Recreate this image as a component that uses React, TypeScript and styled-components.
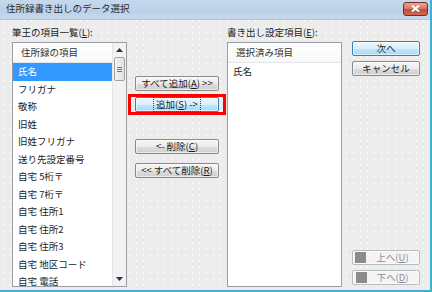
import styled, { createGlobalStyle } from "styled-components";

const GlobalStyle = createGlobalStyle`
    html, body {
        margin: 0;
        padding: 0;
        background: #ececec;
    }
    body {
        font-family: "Noto Sans CJK JP", "Noto Sans", sans-serif;
        font-size: 9.5px;
        color: #1c1c1c;
    }
`;

const Window = styled.div`
    width: 432px;
    height: 292px;
    box-sizing: border-box;
    display: flex;
    flex-direction: column;
    border-right: 2px solid #41aed6;
    border-bottom: 2px solid #41aed6;
    background-color: #ececec;
    background-image: radial-gradient(circle, rgba(255, 255, 255, 0.85) 0.5px, transparent 0.9px);
    background-size: 7px 6px;
    overflow: hidden;
`;

const TitleBar = styled.div`
    height: 19px;
    flex-shrink: 0;
    display: flex;
    align-items: center;
    justify-content: space-between;
    padding: 0 2px 0 6px;
    background: linear-gradient(#c6d8ee, #bcd0e8 60%, #c8d9ed);
    border-bottom: 1px solid #b0c2d8;
`;

const TitleText = styled.div`
    font-size: 9.5px;
    line-height: 12px;
    color: #2a2a2a;
    margin-top: -4px;
`;

const CloseButton = styled.div`
    width: 23px;
    height: 12px;
    margin-top: -2px;
    display: flex;
    align-items: center;
    justify-content: center;
    border: 1px solid #7a2a20;
    border-radius: 3px;
    background: linear-gradient(#e8a898, #d8786a 45%, #c24a36 55%, #d06a52);
`;

const Body = styled.div`
    flex: 1;
    display: flex;
    padding: 5px 0 3px 12px;
`;

const ListColumn = styled.div`
    width: 115px;
    display: flex;
    flex-direction: column;
`;

const Label = styled.div`
    height: 14px;
    line-height: 14px;
    margin-bottom: 3px;
    white-space: nowrap;
`;

const ListBox = styled.div`
    height: 245px;
    box-sizing: border-box;
    border: 1px solid #9a9ea6;
    background: #fff;
    display: flex;
    overflow: hidden;
`;

const ListInner = styled.div`
    flex: 1;
    display: flex;
    flex-direction: column;
    overflow: hidden;
`;

const ListHeader = styled.div`
    height: 19px;
    flex-shrink: 0;
    line-height: 19px;
    padding-left: 8px;
    background: linear-gradient(#ffffff, #f7f8f9);
    border-bottom: 1px solid #e3e5e8;
    color: #333;
`;

const Row = styled.div<{ $selected?: boolean }>`
    height: 17.5px;
    flex-shrink: 0;
    line-height: 17px;
    padding-left: 5px;
    white-space: nowrap;
    background: ${(p) => (p.$selected ? "#3399ff" : "transparent")};
    color: ${(p) => (p.$selected ? "#ffffff" : "#1c1c1c")};
`;

const ScrollBar = styled.div`
    width: 13px;
    flex-shrink: 0;
    display: flex;
    flex-direction: column;
    align-items: center;
    background: #f2f2f2;
    border-left: 1px solid #e6e6e6;
`;

const ScrollArrow = styled.div`
    height: 14px;
    width: 100%;
    display: flex;
    align-items: center;
    justify-content: center;
`;

const ScrollThumb = styled.div`
    width: 11px;
    height: 24px;
    box-sizing: border-box;
    border: 1px solid #a2a2a2;
    border-radius: 2px;
    background: linear-gradient(90deg, #f4f4f4, #e0e0e0);
    display: flex;
    flex-direction: column;
    align-items: center;
    justify-content: center;
    gap: 1px;
`;

const Grip = styled.div`
    width: 5px;
    height: 1px;
    background: #7a7a7a;
`;

const ScrollTrack = styled.div`
    flex: 1;
`;

const MiddleColumn = styled.div`
    width: 100px;
    display: flex;
    flex-direction: column;
    align-items: center;
    padding-top: 51px;
`;

const Button = styled.div<{ $focus?: boolean; $disabled?: boolean; $width?: number }>`
    width: ${(p) => p.$width ?? 84}px;
    height: 15px;
    box-sizing: border-box;
    display: flex;
    align-items: center;
    justify-content: center;
    gap: 8px;
    white-space: nowrap;
    line-height: 13px;
    border: 1px solid ${(p) => (p.$focus ? "#3c7fb1" : p.$disabled ? "#b8bcbf" : "#8a8a8a")};
    border-radius: 2px;
    color: ${(p) => (p.$disabled ? "#8c8c8c" : "#1c1c1c")};
    background: ${(p) =>
        p.$focus
            ? "linear-gradient(#eaf6fd 0%, #d9f0fc 50%, #bee6fd 51%, #a7d9f5 100%)"
            : p.$disabled
            ? "#f4f4f4"
            : "linear-gradient(#f6f6f6 0%, #ebebeb 50%, #dddddd 51%, #cfcfcf 100%)"};
    box-shadow: inset 0 0 0 1px rgba(255, 255, 255, 0.6);
`;

const Caption = styled.span<{ $focus?: boolean }>`
    padding: 0 2px;
    outline: ${(p) => (p.$focus ? "1px dotted #444" : "none")};
`;

const Highlight = styled.div`
    border: 3px solid #ff0000;
    padding: 0 4px;
    margin-top: 3px;
`;

const MiddleGap = styled.div<{ $h: number }>`
    height: ${(p) => p.$h}px;
    flex-shrink: 0;
`;

const ButtonColumn = styled.div`
    width: 68px;
    margin-left: 10px;
    display: flex;
    flex-direction: column;
    gap: 5px;
    padding-top: 16px;
    padding-bottom: 2px;
`;

const BottomGroup = styled.div`
    margin-top: auto;
    display: flex;
    flex-direction: column;
    gap: 5px;
`;

const GrayBox = styled.span`
    width: 11px;
    height: 11px;
    background: #8c8c8c;
    margin-left: -6px;
`;

const leftItems = [
    "氏名",
    "フリガナ",
    "敬称",
    "旧姓",
    "旧姓フリガナ",
    "送り先設定番号",
    "自宅 5桁〒",
    "自宅 7桁〒",
    "自宅 住所1",
    "自宅 住所2",
    "自宅 住所3",
    "自宅 地区コード",
    "自宅 電話",
];

const Arrow = ({ up }: { up?: boolean }) => (
    <svg width="7" height="4" viewBox="0 0 7 4">
        <path d={up ? "M0 4 L3.5 0 L7 4 Z" : "M0 0 L3.5 4 L7 0 Z"} fill="#333" />
    </svg>
);

const App = () => {
    return (
        <>
            <GlobalStyle />
            <Window>
                <TitleBar>
                    <TitleText>住所録書き出しのデータ選択</TitleText>
                    <CloseButton>
                        <svg width="9" height="7" viewBox="0 0 9 7">
                            <path d="M1 0.5 L8 6.5 M8 0.5 L1 6.5" stroke="#fff" strokeWidth="2" />
                        </svg>
                    </CloseButton>
                </TitleBar>
                <Body>
                    <ListColumn>
                        <Label>
                            筆王の項目一覧(<u>L</u>):
                        </Label>
                        <ListBox>
                            <ListInner>
                                <ListHeader>住所録の項目</ListHeader>
                                {leftItems.map((item, i) => (
                                    <Row key={item} $selected={i === 0}>
                                        {item}
                                    </Row>
                                ))}
                            </ListInner>
                            <ScrollBar>
                                <ScrollArrow>
                                    <Arrow up />
                                </ScrollArrow>
                                <ScrollThumb>
                                    <Grip />
                                    <Grip />
                                    <Grip />
                                </ScrollThumb>
                                <ScrollTrack />
                                <ScrollArrow>
                                    <Arrow />
                                </ScrollArrow>
                            </ScrollBar>
                        </ListBox>
                    </ListColumn>

                    <MiddleColumn>
                        <Button>
                            <Caption>
                                すべて追加(<u>A</u>) &gt;&gt;
                            </Caption>
                        </Button>
                        <Highlight>
                            <Button $focus>
                                <Caption $focus>
                                    追加(<u>S</u>) -&gt;
                                </Caption>
                            </Button>
                        </Highlight>
                        <MiddleGap $h={24} />
                        <Button>
                            <Caption>
                                &lt;- 削除(<u>C</u>)
                            </Caption>
                        </Button>
                        <MiddleGap $h={9} />
                        <Button>
                            <Caption>
                                &lt;&lt; すべて削除(<u>R</u>)
                            </Caption>
                        </Button>
                    </MiddleColumn>

                    <ListColumn>
                        <Label>
                            書き出し設定項目(<u>E</u>):
                        </Label>
                        <ListBox>
                            <ListInner>
                                <ListHeader>選択済み項目</ListHeader>
                                <Row>氏名</Row>
                            </ListInner>
                        </ListBox>
                    </ListColumn>

                    <ButtonColumn>
                        <Button $focus $width={68}>
                            <Caption>次へ</Caption>
                        </Button>
                        <Button $width={68}>
                            <Caption>キャンセル</Caption>
                        </Button>
                        <BottomGroup>
                            <Button $disabled $width={68}>
                                <GrayBox />
                                <Caption>
                                    上へ(<u>U</u>)
                                </Caption>
                            </Button>
                            <Button $disabled $width={68}>
                                <GrayBox />
                                <Caption>
                                    下へ(<u>D</u>)
                                </Caption>
                            </Button>
                        </BottomGroup>
                    </ButtonColumn>
                </Body>
            </Window>
        </>
    );
};

export default App;
